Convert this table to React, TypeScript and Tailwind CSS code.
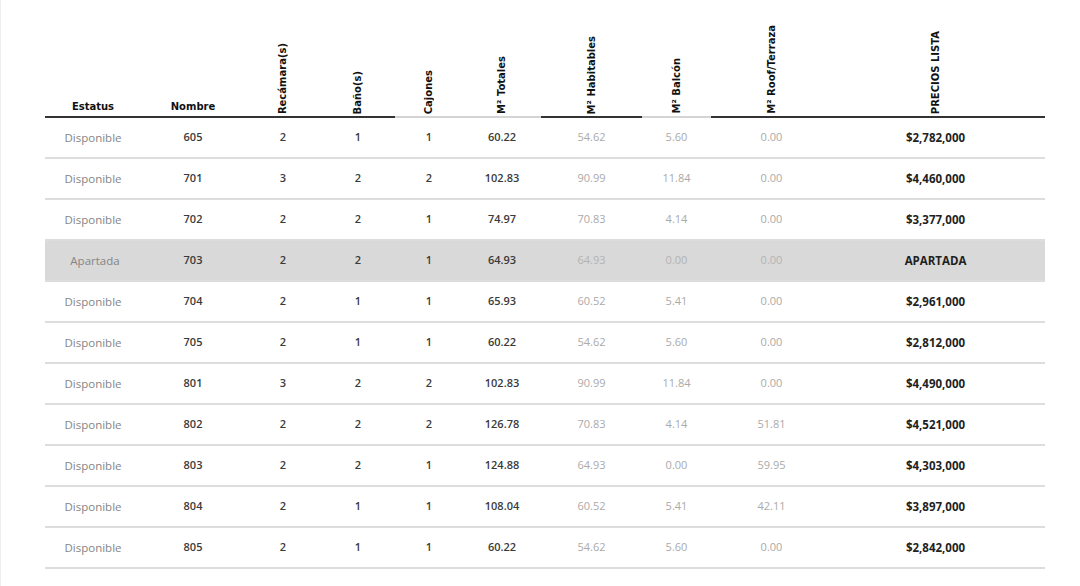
import React from 'react';

type Row = {
  estatus: string;
  nombre: string;
  rec: string;
  banos: string;
  cajones: string;
  totales: string;
  habitables: string;
  balcon: string;
  roof: string;
  precio: string;
};

const rows: Row[] = [
  { estatus: 'Disponible', nombre: '605', rec: '2', banos: '1', cajones: '1', totales: '60.22', habitables: '54.62', balcon: '5.60', roof: '0.00', precio: '$2,782,000' },
  { estatus: 'Disponible', nombre: '701', rec: '3', banos: '2', cajones: '2', totales: '102.83', habitables: '90.99', balcon: '11.84', roof: '0.00', precio: '$4,460,000' },
  { estatus: 'Disponible', nombre: '702', rec: '2', banos: '2', cajones: '1', totales: '74.97', habitables: '70.83', balcon: '4.14', roof: '0.00', precio: '$3,377,000' },
  { estatus: 'Apartada', nombre: '703', rec: '2', banos: '2', cajones: '1', totales: '64.93', habitables: '64.93', balcon: '0.00', roof: '0.00', precio: 'APARTADA' },
  { estatus: 'Disponible', nombre: '704', rec: '2', banos: '1', cajones: '1', totales: '65.93', habitables: '60.52', balcon: '5.41', roof: '0.00', precio: '$2,961,000' },
  { estatus: 'Disponible', nombre: '705', rec: '2', banos: '1', cajones: '1', totales: '60.22', habitables: '54.62', balcon: '5.60', roof: '0.00', precio: '$2,812,000' },
  { estatus: 'Disponible', nombre: '801', rec: '3', banos: '2', cajones: '2', totales: '102.83', habitables: '90.99', balcon: '11.84', roof: '0.00', precio: '$4,490,000' },
  { estatus: 'Disponible', nombre: '802', rec: '2', banos: '2', cajones: '2', totales: '126.78', habitables: '70.83', balcon: '4.14', roof: '51.81', precio: '$4,521,000' },
  { estatus: 'Disponible', nombre: '803', rec: '2', banos: '2', cajones: '1', totales: '124.88', habitables: '64.93', balcon: '0.00', roof: '59.95', precio: '$4,303,000' },
  { estatus: 'Disponible', nombre: '804', rec: '2', banos: '1', cajones: '1', totales: '108.04', habitables: '60.52', balcon: '5.41', roof: '42.11', precio: '$3,897,000' },
  { estatus: 'Disponible', nombre: '805', rec: '2', banos: '1', cajones: '1', totales: '60.22', habitables: '54.62', balcon: '5.60', roof: '0.00', precio: '$2,842,000' },
];

const grid = 'grid w-[1000px] grid-cols-[96px_104px_76px_74px_68px_78px_101px_69px_121px_213px]';

function Vertical({ label }: { label: string }) {
  return (
    <span className="[writing-mode:vertical-rl] rotate-180 whitespace-nowrap leading-none">{label}</span>
  );
}

export default function App() {
  return (
    <div className="min-h-[586px] w-[1080px] bg-white border-l border-[#eeeeee] pl-[44px] font-['Open_Sans',sans-serif]">
      {/* header */}
      <div className={`${grid} h-[118px] font-['DejaVu_Sans',sans-serif] font-bold text-[10px] text-[#111]`}>
        <div className="flex items-end justify-center pb-[2px] border-b-2 border-[#333]">Estatus</div>
        <div className="flex items-end justify-center pb-[2px] border-b-2 border-[#333]">Nombre</div>
        <div className="flex items-end justify-center pb-[2px] border-b-2 border-[#333]"><Vertical label="Recámara(s)" /></div>
        <div className="flex items-end justify-center pb-[2px] border-b-2 border-[#333]"><Vertical label="Baño(s)" /></div>
        <div className="flex items-end justify-center pb-[2px] border-b-2 border-[#d4d4d4]"><Vertical label="Cajones" /></div>
        <div className="flex items-end justify-center pb-[2px] border-b-2 border-[#d4d4d4]"><Vertical label="M² Totales" /></div>
        <div className="flex items-end justify-center pb-[2px] border-b-2 border-[#333]"><Vertical label="M² Habitables" /></div>
        <div className="flex items-end justify-center pb-[2px] border-b-2 border-[#d4d4d4]"><Vertical label="M² Balcón" /></div>
        <div className="flex items-end justify-center pb-[2px] border-b-2 border-[#333]"><Vertical label="M² Roof/Terraza" /></div>
        <div className="flex items-end justify-center pb-[2px] pr-[6px] border-b-2 border-[#333]"><Vertical label="PRECIOS LISTA" /></div>
      </div>

      {/* rows */}
      {rows.map((r) => {
        const apartada = r.estatus === 'Apartada';
        return (
          <div
            key={r.nombre}
            className={`${grid} h-[41px] items-center text-center text-[11px] border-b-2 border-[#dddddd] ${apartada ? 'bg-[#d9d9d9]' : ''}`}
          >
            <div className={`text-[#858585] text-[11.5px] ${apartada ? 'pl-[4px]' : ''}`}>{r.estatus}</div>
            <div className="text-[#3a3a3a] font-semibold">{r.nombre}</div>
            <div className="text-[#3a3a3a] font-semibold">{r.rec}</div>
            <div className="text-[#3a3a3a] font-semibold">{r.banos}</div>
            <div className="text-[#3a3a3a] font-semibold">{r.cajones}</div>
            <div className="text-[#3a3a3a] font-semibold">{r.totales}</div>
            <div className={apartada ? 'text-[#b3b3b3]' : 'text-[#aaaaaa]'}>{r.habitables}</div>
            <div className={apartada ? 'text-[#b3b3b3]' : 'text-[#aaaaaa]'}>{r.balcon}</div>
            <div className={apartada ? 'text-[#b3b3b3]' : 'text-[#aaaaaa]'}>{r.roof}</div>
            <div className="text-[#1f1f1f] font-bold text-[11.5px] pr-[6px]">{r.precio}</div>
          </div>
        );
      })}
    </div>
  );
}
